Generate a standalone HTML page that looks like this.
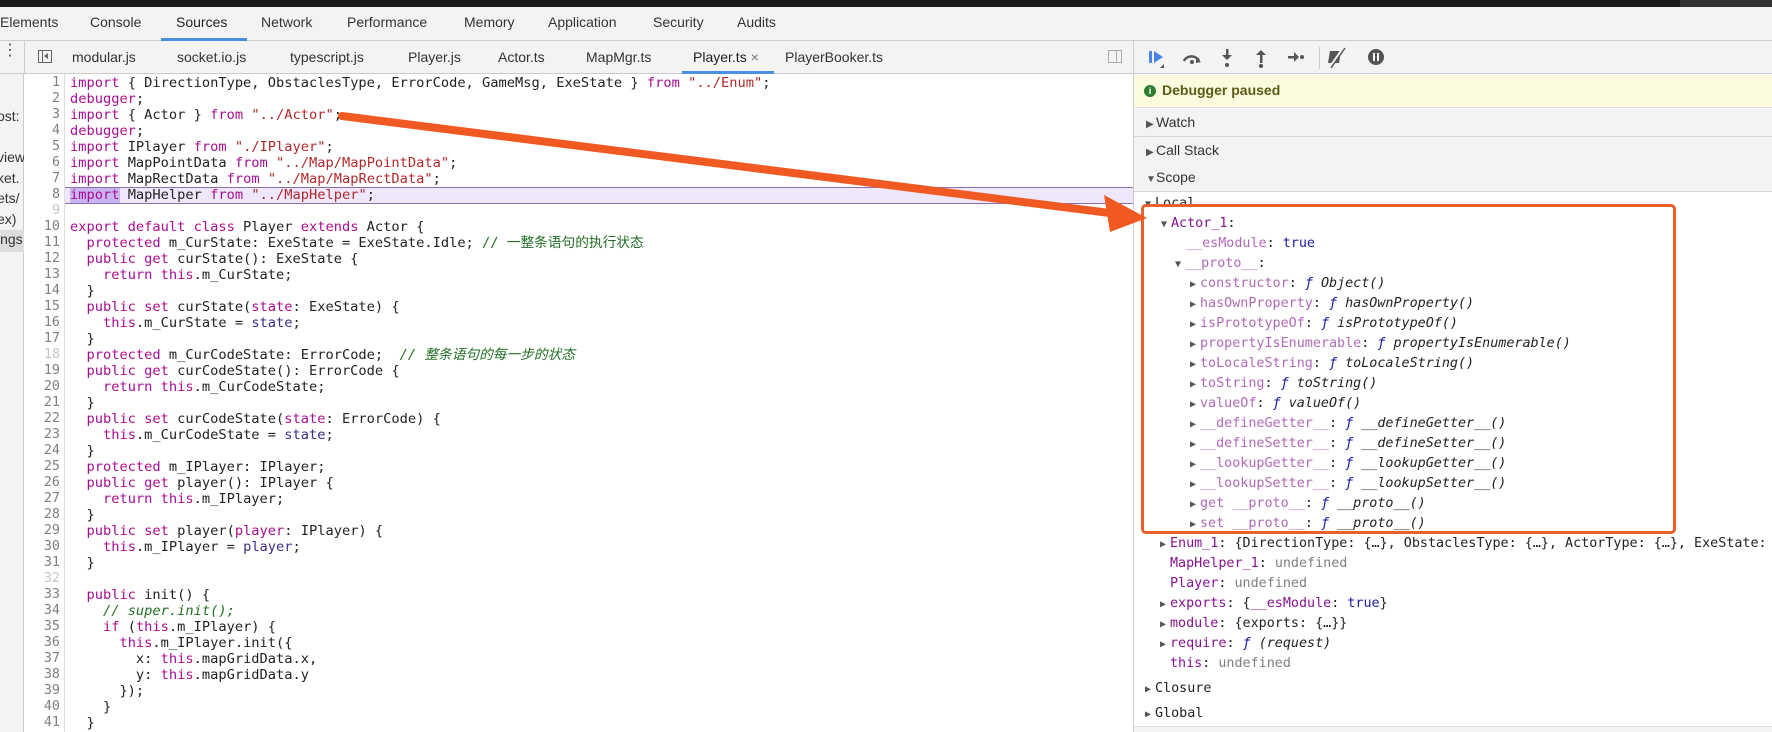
<!DOCTYPE html>
<html><head><meta charset="utf-8"><style>
*{margin:0;padding:0;box-sizing:border-box}
body{width:1772px;height:732px;overflow:hidden;background:#fff;position:relative;font-family:"Liberation Sans",Arial,sans-serif;color:#222}
.abs{position:absolute}
.tab{position:absolute;top:14px;font-size:14px;color:#333;white-space:nowrap}
.ft{position:absolute;top:49px;font-size:14px;color:#333;white-space:nowrap}
.mono{font-family:"DejaVu Sans Mono","Liberation Mono","Noto Sans CJK SC",monospace}
.ln{position:absolute;left:26px;width:34px;text-align:right;font-size:13.4px;color:#808080;height:16px;line-height:16px}
.ln.d{color:#c4c4c4}
.cl{position:absolute;left:70px;font-size:13.7px;height:16px;line-height:16px;white-space:pre;color:#222}
.k{color:#a90d91}.s{color:#b2292a}.c{color:#236e25}.ci{color:#236e25;font-style:italic}.v{color:#3c2a8c}
.sr{position:absolute;font-size:13.4px;height:20px;line-height:20px;white-space:pre;color:#222}
.p{color:#881391}.pd{color:#b06ab8}.fn{font-style:italic;color:#222}.f{color:#1a1aa6;font-style:italic}.u{color:#808080}.b{color:#1a1aa6}
.tri{font-size:10px;color:#555;display:inline-block;width:10px}
.sh{position:absolute;left:1134px;right:0;height:28px;background:#f3f3f3;border-bottom:1px solid #d8d8d8;font-size:14px;line-height:27px;padding-left:12px;color:#333}
</style></head><body>
<div class="abs" style="left:0;top:0;width:1772px;height:7px;background:#1b1b1b"></div>
<div class="abs" style="left:1680px;top:0;width:92px;height:7px;background:#333"></div>
<div class="abs" style="left:0;top:7px;width:1772px;height:34px;background:#f3f3f3;border-bottom:1px solid #cdcdcd"></div>
<div class="tab" style="left:0">Elements</div>
<div class="tab" style="left:90px">Console</div>
<div class="tab" style="left:176px;color:#222">Sources</div>
<div class="abs" style="left:161px;top:38px;width:86px;height:3px;background:#4a8fe0"></div>
<div class="tab" style="left:261px">Network</div>
<div class="tab" style="left:347px">Performance</div>
<div class="tab" style="left:464px">Memory</div>
<div class="tab" style="left:548px">Application</div>
<div class="tab" style="left:653px">Security</div>
<div class="tab" style="left:737px">Audits</div>

<div class="abs" style="left:0;top:41px;width:1134px;height:33px;background:#f3f3f3;border-bottom:1px solid #cdcdcd"></div>
<div class="abs" style="left:2px;top:47px;font-size:16px;color:#555;line-height:8px">⋮</div>
<div class="abs" style="left:24px;top:41px;width:1px;height:33px;background:#cdcdcd"></div>
<div class="abs" style="left:38px;top:50px;width:14px;height:13px;border:1px solid #666"></div>
<div class="abs" style="left:42px;top:50px;width:1px;height:13px;background:#666"></div>
<div class="abs" style="left:44px;top:53px;width:0;height:0;border-top:3.5px solid transparent;border-bottom:3.5px solid transparent;border-right:4px solid #666"></div>
<div class="ft" style="left:72px">modular.js</div>
<div class="ft" style="left:177px">socket.io.js</div>
<div class="ft" style="left:290px">typescript.js</div>
<div class="ft" style="left:408px">Player.js</div>
<div class="ft" style="left:498px">Actor.ts</div>
<div class="ft" style="left:586px">MapMgr.ts</div>
<div class="ft" style="left:693px;color:#222">Player.ts <span style="color:#777">×</span></div>
<div class="abs" style="left:682px;top:71px;width:92px;height:3px;background:#4a8fe0"></div>
<div class="ft" style="left:785px">PlayerBooker.ts</div>
<div class="abs" style="left:1108px;top:50px;width:14px;height:13px;border:1px solid #aaa"></div>
<div class="abs" style="left:1116px;top:50px;width:1px;height:13px;background:#aaa"></div>

<div class="abs" style="left:0;top:74px;width:24px;height:658px;background:#f3f3f3;border-right:1px solid #cdcdcd"></div>
<div class="abs" style="left:0;top:230px;width:24px;height:22px;background:#ddd"></div>
<div class="abs" style="left:-3px;top:106px;font-size:14px;line-height:20.5px;color:#333;width:27px;overflow:hidden;white-space:nowrap">ost:<br><span style="color:#4a8fe0">.</span><br>view<br>ket.<br>ets/<br>ex)<br>ings</div>

<div class="abs" style="left:64px;top:74px;width:1px;height:658px;background:#ddd"></div>
<div class="abs" style="left:65px;top:187px;width:1068px;height:17px;background:#efe7fb;border-top:1px solid #8a6fb5;border-bottom:1px solid #8a6fb5"></div>
<div class="abs" style="left:70px;top:188px;width:50px;height:15px;background:#c9b4f2"></div>

<div class="mono">
<div class="ln" style="top:75px">1</div><div class="ln" style="top:91px">2</div><div class="ln" style="top:107px">3</div><div class="ln" style="top:123px">4</div><div class="ln" style="top:139px">5</div><div class="ln" style="top:155px">6</div><div class="ln" style="top:171px">7</div><div class="ln" style="top:187px">8</div><div class="ln d" style="top:203px">9</div><div class="ln" style="top:219px">10</div><div class="ln" style="top:235px">11</div><div class="ln" style="top:251px">12</div><div class="ln" style="top:267px">13</div><div class="ln" style="top:283px">14</div><div class="ln" style="top:299px">15</div><div class="ln" style="top:315px">16</div><div class="ln" style="top:331px">17</div><div class="ln d" style="top:347px">18</div><div class="ln" style="top:363px">19</div><div class="ln" style="top:379px">20</div><div class="ln" style="top:395px">21</div><div class="ln" style="top:411px">22</div><div class="ln" style="top:427px">23</div><div class="ln" style="top:443px">24</div><div class="ln" style="top:459px">25</div><div class="ln" style="top:475px">26</div><div class="ln" style="top:491px">27</div><div class="ln" style="top:507px">28</div><div class="ln" style="top:523px">29</div><div class="ln" style="top:539px">30</div><div class="ln" style="top:555px">31</div><div class="ln d" style="top:571px">32</div><div class="ln" style="top:587px">33</div><div class="ln" style="top:603px">34</div><div class="ln" style="top:619px">35</div><div class="ln" style="top:635px">36</div><div class="ln" style="top:651px">37</div><div class="ln" style="top:667px">38</div><div class="ln" style="top:683px">39</div><div class="ln" style="top:699px">40</div><div class="ln" style="top:715px">41</div>

<div class="cl" style="top:75px"><span class="k">import</span> { DirectionType, ObstaclesType, ErrorCode, GameMsg, ExeState } <span class="k">from</span> <span class="s">"../Enum"</span>;</div>
<div class="cl" style="top:91px"><span class="k">debugger</span>;</div>
<div class="cl" style="top:107px"><span class="k">import</span> { Actor } <span class="k">from</span> <span class="s">"../Actor"</span>;</div>
<div class="cl" style="top:123px"><span class="k">debugger</span>;</div>
<div class="cl" style="top:139px"><span class="k">import</span> IPlayer <span class="k">from</span> <span class="s">"./IPlayer"</span>;</div>
<div class="cl" style="top:155px"><span class="k">import</span> MapPointData <span class="k">from</span> <span class="s">"../Map/MapPointData"</span>;</div>
<div class="cl" style="top:171px"><span class="k">import</span> MapRectData <span class="k">from</span> <span class="s">"../Map/MapRectData"</span>;</div>
<div class="cl" style="top:187px"><span class="k">import</span> MapHelper <span class="k">from</span> <span class="s">"../MapHelper"</span>;</div>
<div class="cl" style="top:219px"><span class="k">export default class</span> Player <span class="k">extends</span> Actor {</div>
<div class="cl" style="top:235px">  <span class="k">protected</span> m_CurState: ExeState = ExeState.Idle; <span class="c">// 一整条语句的执行状态</span></div>
<div class="cl" style="top:251px">  <span class="k">public get</span> curState(): ExeState {</div>
<div class="cl" style="top:267px">    <span class="k">return this</span>.m_CurState;</div>
<div class="cl" style="top:283px">  }</div>
<div class="cl" style="top:299px">  <span class="k">public set</span> curState(<span class="k">state</span>: ExeState) {</div>
<div class="cl" style="top:315px">    <span class="k">this</span>.m_CurState = <span class="v">state</span>;</div>
<div class="cl" style="top:331px">  }</div>
<div class="cl" style="top:347px">  <span class="k">protected</span> m_CurCodeState: ErrorCode;  <span class="ci">// 整条语句的每一步的状态</span></div>
<div class="cl" style="top:363px">  <span class="k">public get</span> curCodeState(): ErrorCode {</div>
<div class="cl" style="top:379px">    <span class="k">return this</span>.m_CurCodeState;</div>
<div class="cl" style="top:395px">  }</div>
<div class="cl" style="top:411px">  <span class="k">public set</span> curCodeState(<span class="k">state</span>: ErrorCode) {</div>
<div class="cl" style="top:427px">    <span class="k">this</span>.m_CurCodeState = <span class="v">state</span>;</div>
<div class="cl" style="top:443px">  }</div>
<div class="cl" style="top:459px">  <span class="k">protected</span> m_IPlayer: IPlayer;</div>
<div class="cl" style="top:475px">  <span class="k">public get</span> player(): IPlayer {</div>
<div class="cl" style="top:491px">    <span class="k">return this</span>.m_IPlayer;</div>
<div class="cl" style="top:507px">  }</div>
<div class="cl" style="top:523px">  <span class="k">public set</span> player(<span class="k">player</span>: IPlayer) {</div>
<div class="cl" style="top:539px">    <span class="k">this</span>.m_IPlayer = <span class="v">player</span>;</div>
<div class="cl" style="top:555px">  }</div>
<div class="cl" style="top:587px">  <span class="k">public</span> init() {</div>
<div class="cl" style="top:603px">    <span class="ci">// super.init();</span></div>
<div class="cl" style="top:619px">    <span class="k">if</span> (<span class="k">this</span>.m_IPlayer) {</div>
<div class="cl" style="top:635px">      <span class="k">this</span>.m_IPlayer.init({</div>
<div class="cl" style="top:651px">        x: <span class="k">this</span>.mapGridData.x,</div>
<div class="cl" style="top:667px">        y: <span class="k">this</span>.mapGridData.y</div>
<div class="cl" style="top:683px">      });</div>
<div class="cl" style="top:699px">    }</div>
<div class="cl" style="top:715px">  }</div>
</div>

<div class="abs" style="left:1133px;top:41px;width:1px;height:691px;background:#cdcdcd"></div>
<div class="abs" style="left:1134px;top:41px;width:638px;height:33px;background:#f3f3f3;border-bottom:1px solid #cdcdcd"></div>
<svg class="abs" style="left:1134px;top:41px" width="300" height="33" viewBox="0 0 300 33">
 <rect x="15" y="10" width="3" height="12" fill="#4a86e8"/><path d="M20 10 L29 16 L20 22Z" fill="#4a86e8"/><path d="M26 27 L30 23 L30 27Z" fill="#555"/>
 <path d="M50 20 A8 7 0 0 1 65 20" stroke="#555" stroke-width="2.5" fill="none"/><path d="M62 17 L67 21 L62 22Z" fill="#555"/><circle cx="58" cy="21" r="2" fill="#555"/>
 <rect x="92" y="8" width="2.5" height="10" fill="#555"/><path d="M88 14 L93 19 L98 14Z" fill="#555"/><circle cx="93" cy="24" r="2" fill="#555"/>
 <rect x="126" y="12" width="2.5" height="10" fill="#555"/><path d="M122 14 L127 9 L132 14Z" fill="#555"/><circle cx="127" cy="25" r="2" fill="#555"/>
 <rect x="154" y="15" width="8" height="2.5" fill="#555"/><path d="M160 11 L165 16 L160 21Z" fill="#555"/><circle cx="168" cy="16" r="2" fill="#555"/>
 <rect x="185" y="6" width="1" height="22" fill="#ccc"/>
 <path d="M196 10 L207 10 L205 22 L194 22Z" fill="#555"/><path d="M196 26 L210 6" stroke="#f3f3f3" stroke-width="2.5"/><path d="M197 27 L211 7" stroke="#555" stroke-width="1.5"/>
 <circle cx="242" cy="16" r="8" fill="#555"/><rect x="239" y="12" width="2" height="8" fill="#fff"/><rect x="243" y="12" width="2" height="8" fill="#fff"/>
</svg>
<div class="abs" style="left:1134px;top:75px;width:638px;height:33px;background:#fcfbe0;border-bottom:1px solid #ddd"></div>
<div class="abs" style="left:1144px;top:85px;width:12px;height:12px;border-radius:50%;background:#2e7d32;color:#fff;font-size:9px;font-weight:bold;text-align:center;line-height:12px">i</div>
<div class="abs" style="left:1162px;top:82px;font-size:14px;font-weight:bold;color:#5b5b16">Debugger paused</div>
<div class="sh" style="top:109px"><span class="tri">▶</span>Watch</div>
<div class="sh" style="top:137px"><span class="tri">▶</span>Call Stack</div>
<div class="sh" style="top:164px"><span class="tri">▼</span>Scope</div>

<div class="mono">
<div class="sr" style="left:1145px;top:194px"><span class="tri">▼</span>Local</div>
<div class="sr" style="left:1161px;top:214px"><span class="tri">▼</span><span class="p">Actor_1</span>:</div>
<div class="sr" style="left:1186px;top:234px"><span class="pd">__esModule</span>: <span class="b">true</span></div>
<div class="sr" style="left:1175px;top:254px"><span class="tri">▼</span><span class="pd">__proto__</span>:</div>
<div class="sr" style="left:1190px;top:274px"><span class="tri">▶</span><span class="pd">constructor</span>: <span class="f">ƒ</span> <span class="fn">Object()</span></div>
<div class="sr" style="left:1190px;top:294px"><span class="tri">▶</span><span class="pd">hasOwnProperty</span>: <span class="f">ƒ</span> <span class="fn">hasOwnProperty()</span></div>
<div class="sr" style="left:1190px;top:314px"><span class="tri">▶</span><span class="pd">isPrototypeOf</span>: <span class="f">ƒ</span> <span class="fn">isPrototypeOf()</span></div>
<div class="sr" style="left:1190px;top:334px"><span class="tri">▶</span><span class="pd">propertyIsEnumerable</span>: <span class="f">ƒ</span> <span class="fn">propertyIsEnumerable()</span></div>
<div class="sr" style="left:1190px;top:354px"><span class="tri">▶</span><span class="pd">toLocaleString</span>: <span class="f">ƒ</span> <span class="fn">toLocaleString()</span></div>
<div class="sr" style="left:1190px;top:374px"><span class="tri">▶</span><span class="pd">toString</span>: <span class="f">ƒ</span> <span class="fn">toString()</span></div>
<div class="sr" style="left:1190px;top:394px"><span class="tri">▶</span><span class="pd">valueOf</span>: <span class="f">ƒ</span> <span class="fn">valueOf()</span></div>
<div class="sr" style="left:1190px;top:414px"><span class="tri">▶</span><span class="pd">__defineGetter__</span>: <span class="f">ƒ</span> <span class="fn">__defineGetter__()</span></div>
<div class="sr" style="left:1190px;top:434px"><span class="tri">▶</span><span class="pd">__defineSetter__</span>: <span class="f">ƒ</span> <span class="fn">__defineSetter__()</span></div>
<div class="sr" style="left:1190px;top:454px"><span class="tri">▶</span><span class="pd">__lookupGetter__</span>: <span class="f">ƒ</span> <span class="fn">__lookupGetter__()</span></div>
<div class="sr" style="left:1190px;top:474px"><span class="tri">▶</span><span class="pd">__lookupSetter__</span>: <span class="f">ƒ</span> <span class="fn">__lookupSetter__()</span></div>
<div class="sr" style="left:1190px;top:494px"><span class="tri">▶</span><span class="pd">get __proto__</span>: <span class="f">ƒ</span> <span class="fn">__proto__()</span></div>
<div class="sr" style="left:1190px;top:514px"><span class="tri">▶</span><span class="pd">set __proto__</span>: <span class="f">ƒ</span> <span class="fn">__proto__()</span></div>
<div class="sr" style="left:1160px;top:534px;width:612px;overflow:hidden"><span class="tri">▶</span><span class="p">Enum_1</span>: {DirectionType: {…}, ObstaclesType: {…}, ActorType: {…}, ExeState: {…}}</div>
<div class="sr" style="left:1170px;top:554px"><span class="p">MapHelper_1</span>: <span class="u">undefined</span></div>
<div class="sr" style="left:1170px;top:574px"><span class="p">Player</span>: <span class="u">undefined</span></div>
<div class="sr" style="left:1160px;top:594px"><span class="tri">▶</span><span class="p">exports</span>: {<span class="p">__esModule</span>: <span class="b">true</span>}</div>
<div class="sr" style="left:1160px;top:614px"><span class="tri">▶</span><span class="p">module</span>: {exports: {…}}</div>
<div class="sr" style="left:1160px;top:634px"><span class="tri">▶</span><span class="p">require</span>: <span class="f">ƒ</span> <span class="fn">(request)</span></div>
<div class="sr" style="left:1170px;top:654px"><span class="p">this</span>: <span class="u">undefined</span></div>
<div class="sr" style="left:1145px;top:679px"><span class="tri">▶</span>Closure</div>
<div class="sr" style="left:1145px;top:704px"><span class="tri">▶</span>Global</div>
</div>
<div class="abs" style="left:1134px;top:726px;width:638px;height:6px;background:#f3f3f3;border-top:1px solid #ddd"></div>

<div class="abs" style="left:1141px;top:204px;width:535px;height:330px;border:3px solid #e8602c;border-radius:5px"></div>

<svg class="abs" style="left:0;top:0" width="1772" height="732">
 <line x1="342" y1="116" x2="1110" y2="213" stroke="#f05a22" stroke-width="8" stroke-linecap="round"/>
 <path d="M1147 218 L1104 195 L1110 232Z" fill="#f05a22"/>
</svg>
</body></html>
